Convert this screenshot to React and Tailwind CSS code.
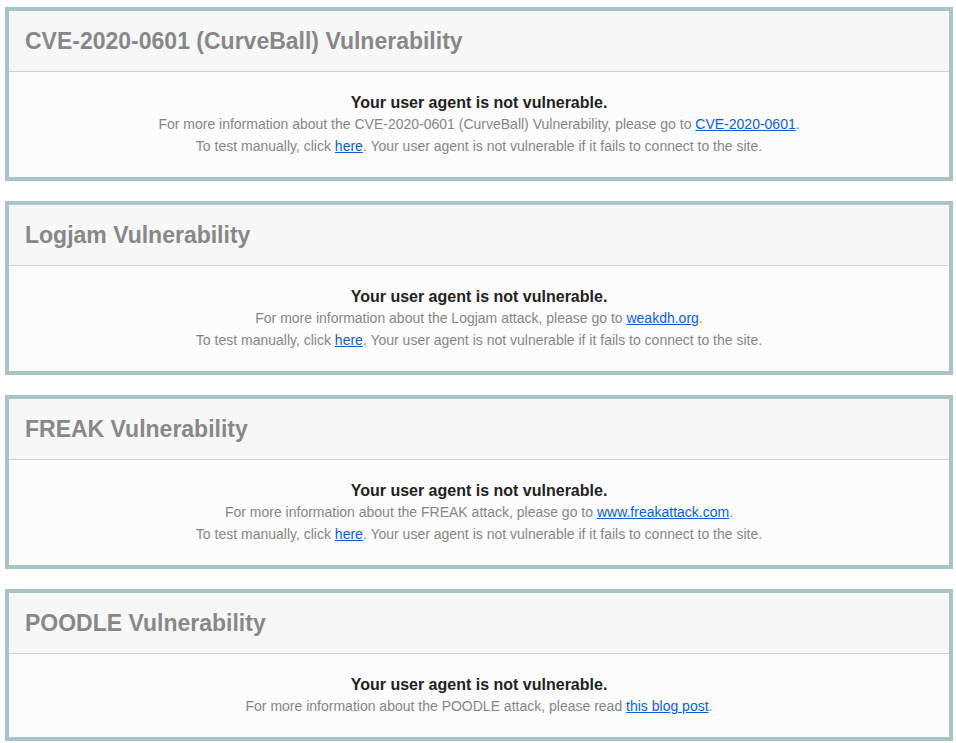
import React from "react";

const Link = ({ children }) => (
  <a href="#" className="text-[#0a5fd6] underline">{children}</a>
);

function Card({ title, info, manual }) {
  return (
    <div className="ml-[5px] w-[948px] border-4 border-[#a8c4c6] bg-[#fcfcfc]">
      <div className="h-[61px] flex items-center px-4 bg-[#f7f7f7] border-b border-[#c9d4d4]">
        <h2 className="text-[23px] font-bold text-[#888888] leading-none">{title}</h2>
      </div>
      <div className="pt-5 pb-5 text-center">
        <div className="text-[16px] leading-[22px] font-bold text-[#222222]">Your user agent is not vulnerable.</div>
        <div className="text-[14px] leading-[21px] text-[#868686]">{info}</div>
        {manual && (
          <div className="text-[14px] leading-[22px] text-[#868686]">
            To test manually, click <Link>here</Link>. Your user agent is not vulnerable if it fails to connect to the site.
          </div>
        )}
      </div>
    </div>
  );
}

export default function App() {
  return (
    <div className="bg-white min-h-[743px] pt-[7px] flex flex-col gap-5" style={{ fontFamily: '"Liberation Sans", Arial, sans-serif' }}>
      <Card
        title="CVE-2020-0601 (CurveBall) Vulnerability"
        info={<>For more information about the CVE-2020-0601 (CurveBall) Vulnerability, please go to <Link>CVE-2020-0601</Link>.</>}
        manual
      />
      <Card
        title="Logjam Vulnerability"
        info={<>For more information about the Logjam attack, please go to <Link>weakdh.org</Link>.</>}
        manual
      />
      <Card
        title="FREAK Vulnerability"
        info={<>For more information about the FREAK attack, please go to <Link>www.freakattack.com</Link>.</>}
        manual
      />
      <Card
        title="POODLE Vulnerability"
        info={<>For more information about the POODLE attack, please read <Link>this blog post</Link>.</>}
      />
    </div>
  );
}
